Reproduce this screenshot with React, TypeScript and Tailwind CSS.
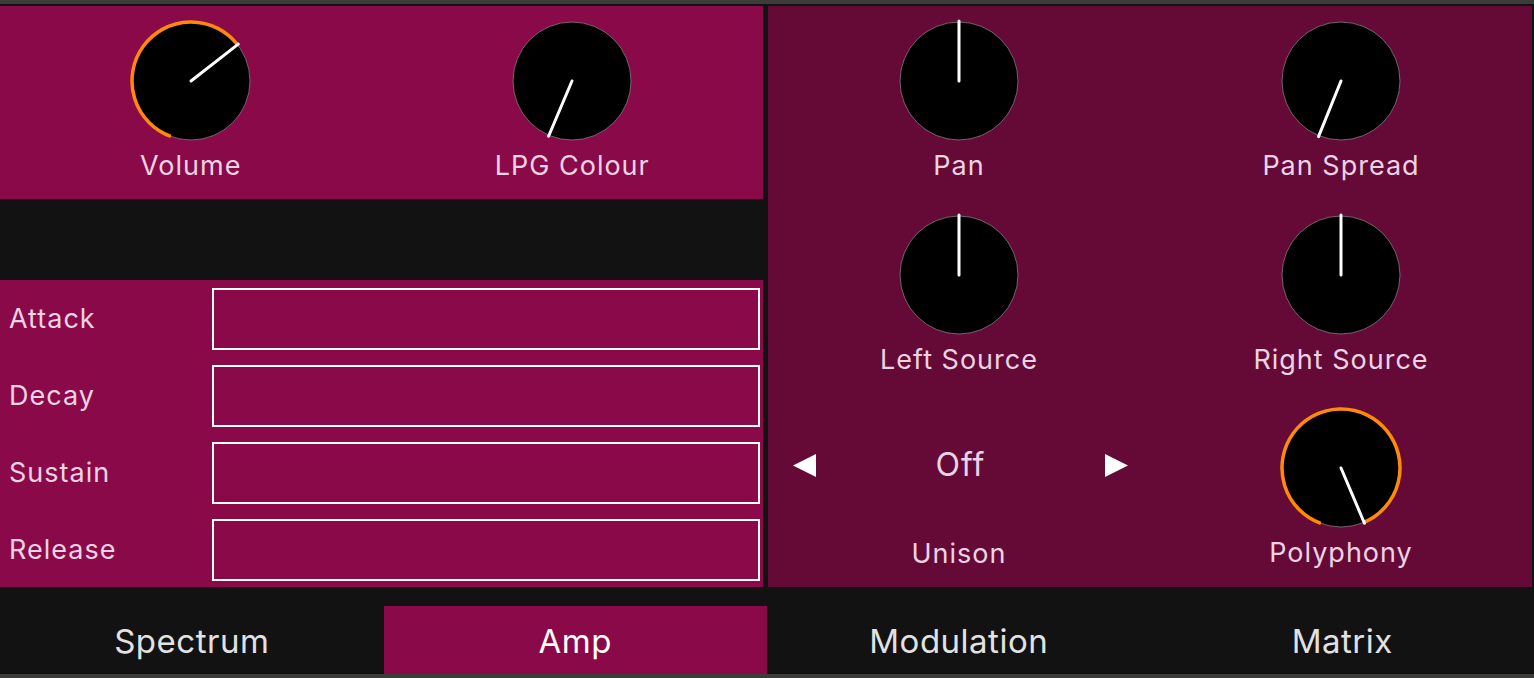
import React from "react";

const MIN = -160;

function polar(cx: number, cy: number, r: number, deg: number) {
  const a = (deg * Math.PI) / 180;
  return { x: cx + r * Math.sin(a), y: cy - r * Math.cos(a) };
}

function Knob({ angle, arc }: { angle: number; arc?: boolean }) {
  const c = 62;
  const r = 59;
  const start = polar(c, c, r, MIN);
  const end = polar(c, c, r, angle);
  const large = angle - MIN > 180 ? 1 : 0;
  const tip = polar(c, c, 60, angle);
  return (
    <svg width="124" height="124" viewBox="0 0 124 124">
      <circle cx={c} cy={c} r={59} fill="#000" stroke="#8c7a84" strokeWidth="0.8" />
      {arc && (
        <path
          d={`M ${start.x} ${start.y} A ${r} ${r} 0 ${large} 1 ${end.x} ${end.y}`}
          fill="none"
          stroke="#ff8a0a"
          strokeWidth="3.5"
        />
      )}
      <line x1={c} y1={c} x2={tip.x} y2={tip.y} stroke="#fff" strokeWidth="3" strokeLinecap="round" />
    </svg>
  );
}

function KnobCell({ label, angle, arc }: { label: string; angle: number; arc?: boolean }) {
  return (
    <div className="flex flex-col items-center pt-[13px]">
      <Knob angle={angle} arc={arc} />
      <span className="mt-[7px] leading-[32px] text-[27px] tracking-[1px] text-[#ecd3e3]">{label}</span>
    </div>
  );
}

const adsr = ["Attack", "Decay", "Sustain", "Release"];
const tabs = ["Spectrum", "Amp", "Modulation", "Matrix"];

export default function App() {
  return (
    <div className="w-[1534px] h-[678px] bg-[#121212] flex flex-col border-t-4 border-b-4 border-[#3c3c38] pt-[2px] font-['Inter',sans-serif] overflow-hidden">
      <div className="flex h-[581px]">
        {/* left column */}
        <div className="w-[763px] flex flex-col">
          <div className="h-[193px] bg-[#8a0a49] grid grid-cols-2">
            <KnobCell label="Volume" angle={52} arc />
            <KnobCell label="LPG Colour" angle={-157} />
          </div>
          <div className="h-[81px]" />
          <div className="h-[307px] bg-[#8a0a49] pt-[8px] flex flex-col gap-[15px]">
            {adsr.map((name) => (
              <div key={name} className="flex items-center h-[62px]">
                <span className="w-[212px] pl-[9px] text-[27px] tracking-[1px] text-[#ecd3e3]">{name}</span>
                <div className="w-[548px] h-[62px] border-2 border-white" />
              </div>
            ))}
          </div>
        </div>
        <div className="w-[5px]" />
        {/* right panel */}
        <div className="w-[764px] bg-[#650a37] grid grid-cols-2 grid-rows-3">
          <KnobCell label="Pan" angle={0} />
          <KnobCell label="Pan Spread" angle={-158} />
          <KnobCell label="Left Source" angle={0} />
          <KnobCell label="Right Source" angle={0} />
          <div className="flex flex-col">
            <div className="flex items-center justify-between pl-[25px] pr-[22px] mt-[54px] h-[36px]">
              <svg width="23" height="23" viewBox="0 0 23 23">
                <polygon points="0,11.5 23,0 23,23" fill="#fff" />
              </svg>
              <span className="text-[32px] leading-[36px] tracking-[1px] text-[#ecd3e3]">Off</span>
              <svg width="23" height="23" viewBox="0 0 23 23">
                <polygon points="23,11.5 0,0 0,23" fill="#fff" />
              </svg>
            </div>
            <span className="mt-[55px] text-center leading-[32px] text-[27px] tracking-[1px] text-[#ecd3e3]">Unison</span>
          </div>
          <KnobCell label="Polyphony" angle={157} arc />
        </div>
      </div>
      {/* tabs */}
      <div className="h-[87px] pt-[19px] grid grid-cols-4">
        {tabs.map((t) => (
          <div
            key={t}
            className={`h-[68px] pt-[3px] flex items-center justify-center text-[33px] tracking-[0.5px] ${
              t === "Amp" ? "bg-[#8a0a49] text-white" : "text-[#e2e2e2]"
            }`}
          >
            {t}
          </div>
        ))}
      </div>
    </div>
  );
}
